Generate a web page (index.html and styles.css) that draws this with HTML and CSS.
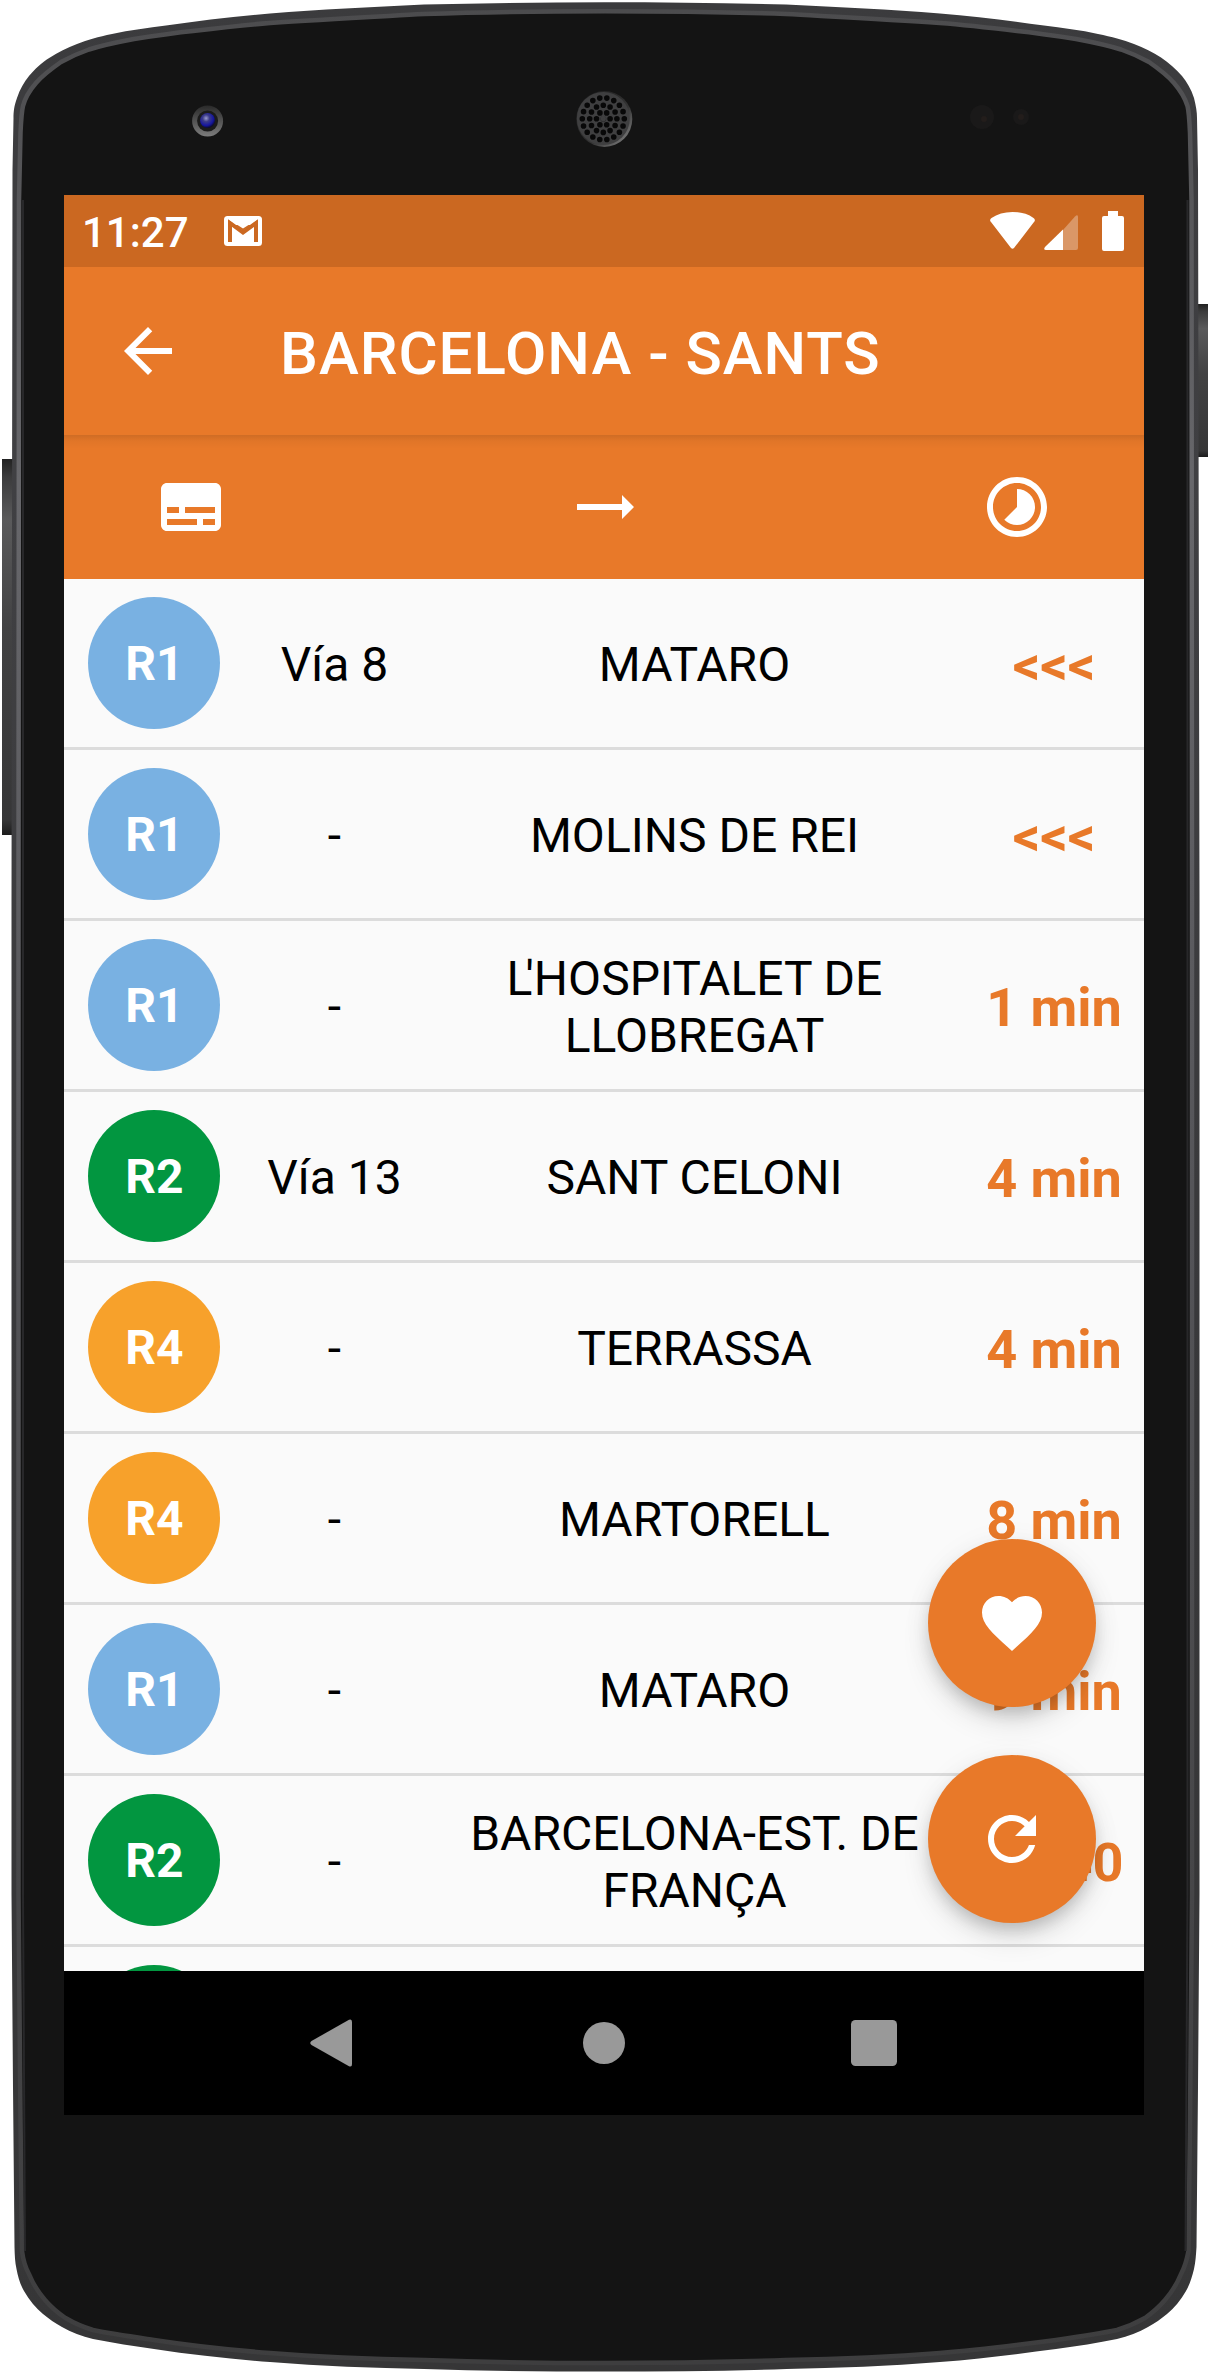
FILE: index.html
```html
<!DOCTYPE html>
<html lang="es">
<head>
<meta charset="utf-8">
<title>Barcelona - Sants</title>
<link rel="stylesheet" href="styles.css">
</head>
<body>
<div class="phone">
  <svg class="frame" viewBox="0 0 1210 2375" aria-hidden="true">
    <defs>
      <linearGradient id="rim" x1="0" y1="0" x2="0" y2="1">
        <stop offset="0" stop-color="#3b3b3d"/>
        <stop offset=".2" stop-color="#404043"/>
        <stop offset=".6" stop-color="#38383a"/>
        <stop offset="1" stop-color="#363637"/>
      </linearGradient>
      <linearGradient id="shine" x1="0" y1="0" x2="0" y2="1">
        <stop offset="0" stop-color="#4c4c4e"/>
        <stop offset=".2" stop-color="#67676b"/>
        <stop offset=".5" stop-color="#555559"/>
        <stop offset=".8" stop-color="#464648"/>
        <stop offset="1" stop-color="#3e3e3f"/>
      </linearGradient>
      <linearGradient id="key" x1="0" y1="0" x2="0" y2="1">
        <stop offset="0" stop-color="#222"/>
        <stop offset=".05" stop-color="#3c3c3d"/>
        <stop offset=".16" stop-color="#5a5a5b"/>
        <stop offset=".45" stop-color="#424243"/>
        <stop offset=".96" stop-color="#363637"/>
        <stop offset="1" stop-color="#1c1c1c"/>
      </linearGradient>
      <linearGradient id="lens" x1="0" y1="0" x2="0" y2="1">
        <stop offset="0" stop-color="#2a2a2a"/>
        <stop offset="1" stop-color="#7c7c7c"/>
      </linearGradient>
      <radialGradient id="iris" cx=".4" cy=".35" r=".65">
        <stop offset="0" stop-color="#9a9ad0"/>
        <stop offset=".35" stop-color="#3c3c88"/>
        <stop offset=".75" stop-color="#1616a0"/>
        <stop offset="1" stop-color="#0c0c30"/>
      </radialGradient>
      <linearGradient id="grille" x1="0" y1="0" x2="1" y2="1">
        <stop offset="0" stop-color="#1c1c1c"/>
        <stop offset=".6" stop-color="#333"/>
        <stop offset="1" stop-color="#909090"/>
      </linearGradient>
    </defs>
    <rect x="2" y="459" width="14" height="376" fill="url(#key)"/>
    <rect x="1195" y="304" width="13" height="153" fill="url(#key)"/>
    <path fill="url(#rim)" d="M605 2.3C545 2.3 484 3 424 4.5C370 7 320 9.500 270 13.500C235 16.500 200 20.500 166 25.500C148 28 130 30 112 34C98 37 88 39.500 77 44C67 48 58 52 50 57.500C41 63 35 69 29 76C24 82 20 89 17 98C14 106 13.500 112 13.500 118L12.500 170L11.500 900V1894L13 2087L14.500 2247C14.700 2255 15 2262 16.500 2269C18 2277 20 2284 24 2291C29 2300 36 2308 43 2314C49 2319 55 2323 62 2327C71 2332 82 2336.500 93 2339C113 2343 134 2346 154 2349C193 2355 231 2359 270 2362C321 2366 373 2368 424 2369C484 2371 545 2371.500 605 2371.500S726 2371 786.500 2369C838 2368 889 2366 940 2362C979 2359 1018 2354 1056 2349C1077 2346 1098 2343 1117 2339C1128 2336.500 1139 2332 1148 2327C1155 2323 1161 2319 1167 2314C1174 2308 1181 2300 1186 2291C1190 2284 1192 2277 1194 2269C1195.500 2262 1196 2255 1196.500 2247L1198 2087L1199.500 1894V900L1198 170L1197 118C1197 112 1196 106 1194 98C1191 89 1187 82 1182 76C1176 69 1169 63 1161 57.500C1153 52 1144 48 1134 44C1123 39.500 1112 37 1098 34C1081 30 1062 28 1044 25.500C1010 20.500 975 16.500 940 13.500C890 9.500 840 7 786 4.500C726 3 665 2.300 605 2.300Z"/>
    <path fill="#141414" stroke="url(#shine)" stroke-width="4.500" d="M605 11.300C545 11.300 484 12 424 14C370 17 320 19.500 270 23C244 25 218 28 193 31C173 33 153 36 134 39C118 42 103 45 89 49.500C79 53 70 57 61 62C51 69 43 75 36 83C30 90 25 98 23 106C21.500 112 21 122 20.500 133L19 200L18.500 900V1894L20.500 2120L22 2251C23 2259 25 2267 29 2274C33 2284 39 2293 45 2300C51 2307 58 2313 65.500 2318C74 2323 83 2327 93 2330C113 2334 134 2337 154 2340C193 2346 231 2350 270 2353C321 2357 373 2359 424 2360C484 2362 545 2363 605 2363S726 2362 786 2360C838 2359 889 2357 940 2353C979 2350 1018 2345 1056 2340C1077 2337 1098 2334 1117 2330C1127 2327 1136 2323 1145 2318C1152 2313 1159 2307 1165 2300C1171 2293 1177 2284 1181 2274C1185 2267 1187 2259 1188.500 2251L1190 2120L1192 1894V900L1191.500 200L1190 133C1189.500 122 1189 112 1187.500 106C1185 98 1180 90 1174 83C1167 75 1159 69 1149 62C1140 57 1131 53 1121 49.500C1107 45 1092 42 1076 39C1057 36 1037 33 1017 31C992 28 966 25 940 23C890 19.500 840 17 786 14C726 12 665 11.300 605 11.300Z"/>
    <path fill="none" stroke="#28282a" stroke-width="2" d="M23 200V1894L25 2251M1187.500 200V1894L1185.500 2251"/>
    <circle cx="207.600" cy="121" r="15.500" fill="url(#lens)"/>
    <circle cx="207.600" cy="121" r="10.500" fill="#1b1b1b"/>
    <circle cx="207.600" cy="120.500" r="7.500" fill="url(#iris)"/>
    <circle cx="604.300" cy="119" r="28" fill="url(#grille)"/>
    <circle cx="603.300" cy="118.500" r="26.500" fill="#3f3f40"/>
    <g fill="none" stroke="#080808" stroke-width="5.600" stroke-linecap="round">
      <circle cx="603.300" cy="118.800" r=".1" fill="#080808"/>
      <circle cx="603.300" cy="118.800" r="6.800" pathLength="6" stroke-dasharray="0 1"/>
      <circle cx="603.300" cy="118.800" r="13.600" pathLength="12" stroke-dasharray="0 1"/>
      <circle cx="603.300" cy="118.800" r="21" pathLength="18" stroke-dasharray="0 1"/>
    </g>
    <circle cx="982" cy="117" r="12" fill="#1a1919"/>
    <circle cx="984" cy="119" r="3" fill="#231d1b"/>
    <circle cx="1021" cy="117" r="8" fill="#1a1919"/>
    <circle cx="1021" cy="117" r="3" fill="#231d1b"/>
  </svg>

  <main class="screen">
    <div class="status">
      <span class="clock">11:27</span>
      <svg class="mail" width="38" height="30" viewBox="0 0 38 30"><rect width="38" height="30" rx="3.500" fill="#fff"/><path d="M6 26V7L19 16.500L32 7V26" fill="none" stroke="#cb6821" stroke-width="4"/><path d="M4 4.500L19 14.500L34 4.500V9H4Z" fill="#cb6821"/><path d="M4 3H34L19 12.500Z" fill="#fff"/></svg>
      <svg class="signals" width="135" height="40" viewBox="0 0 135 40">
        <path fill="#fff" d="M1 11Q-1 9 1.500 7Q10 1 22.500 1T43.500 7Q46 9 44 11L24 37Q22.500 38.500 21 37Z"/>
        <path fill="#da9767" d="M73 19L85 5.500Q88 3 88 6V37Q88 39 86 39H73Z"/>
        <path fill="#fff" d="M73 18.500V39H56Q53 39 55 36Z"/>
        <path fill="#fff" d="M112 5H118V0H128V5H132Q134 5 134 7V38Q134 40 132 40H114Q112 40 112 38V7Q112 5 114 5Z"/>
      </svg>
    </div>

    <header class="appbar">
      <svg class="icon" viewBox="0 0 24 24"><path d="M20 11H7.830l5.590-5.590L12 4l-8 8 8 8 1.410-1.410L7.830 13H20v-2z"/></svg>
      <h1 class="title">BARCELONA - SANTS</h1>
    </header>

    <div class="legend">
      <svg class="icon" viewBox="0 0 24 24"><path d="M20 4H4c-1.100 0-2 .9-2 2v12c0 1.100.9 2 2 2h16c1.100 0 2-.9 2-2V6c0-1.100-.9-2-2-2zM4 12h4v2H4v-2zm10 6H4v-2h10v2zm6 0h-4v-2h4v2zm0-4H10v-2h10v2z"/></svg>
      <svg class="icon" viewBox="0 0 24 24"><path d="M22 12l-4-4v3H3v2h15v3z"/></svg>
      <svg class="icon" viewBox="0 0 24 24"><path d="M16.240 7.760C15.070 6.590 13.540 6 12 6v6l-4.240 4.240c2.340 2.340 6.140 2.340 8.490 0 2.340-2.340 2.340-6.140-.01-8.480zM12 2C6.480 2 2 6.480 2 12s4.480 10 10 10 10-4.480 10-10S17.520 2 12 2zm0 18c-4.420 0-8-3.580-8-8s3.580-8 8-8 8 3.580 8 8-3.580 8-8 8z"/></svg>
    </div>

    <div class="board">
      <div class="row"><span class="line r1">R1</span><span class="via">Vía 8</span><span class="dest">MATARO</span><span class="time">&lt;&lt;&lt;</span></div>
      <div class="row"><span class="line r1">R1</span><span class="via">-</span><span class="dest">MOLINS DE REI</span><span class="time">&lt;&lt;&lt;</span></div>
      <div class="row"><span class="line r1">R1</span><span class="via">-</span><span class="dest"><span class="kern">L</span>'HOSPITALET DE LLOBREGAT</span><span class="time">1 min</span></div>
      <div class="row"><span class="line r2">R2</span><span class="via">Vía 13</span><span class="dest">SANT CELONI</span><span class="time">4 min</span></div>
      <div class="row"><span class="line r4">R4</span><span class="via">-</span><span class="dest">TERRASSA</span><span class="time">4 min</span></div>
      <div class="row"><span class="line r4">R4</span><span class="via">-</span><span class="dest">MARTORELL</span><span class="time">8 min</span></div>
      <div class="row"><span class="line r1">R1</span><span class="via">-</span><span class="dest">MATARO</span><span class="time">9 min</span></div>
      <div class="row"><span class="line r2">R2</span><span class="via">-</span><span class="dest">BARCELONA-EST. DE FRANÇA</span><span class="time">11:40</span></div>
      <div class="row"><span class="line r2"></span></div>
      <div class="fabs">
        <button class="fab" aria-label="Favorito"><svg class="icon" viewBox="0 0 24 24"><path d="M12 21.350l-1.450-1.320C5.400 15.360 2 12.280 2 8.500 2 5.420 4.420 3 7.500 3c1.740 0 3.410.81 4.500 2.090C13.090 3.810 14.760 3 16.500 3 19.580 3 22 5.420 22 8.500c0 3.780-3.400 6.860-8.550 11.540L12 21.350z"/></svg></button>
        <button class="fab" aria-label="Actualizar"><svg class="icon" viewBox="0 0 24 24"><path d="M17.650 6.350C16.200 4.900 14.210 4 12 4c-4.420 0-7.990 3.580-7.990 8s3.570 8 7.990 8c3.730 0 6.840-2.550 7.730-6h-2.080c-.82 2.330-3.040 4-5.650 4-3.310 0-6-2.690-6-6s2.690-6 6-6c1.660 0 3.140.69 4.220 1.780L13 11h7V4l-2.350 2.350z"/></svg></button>
      </div>
    </div>

    <nav class="navbar">
      <svg width="48" height="48" viewBox="0 0 48 48"><path fill="#999" d="M1.500 22L39 .8Q42 -.5 42 3V45Q42 48.500 39 47.200L1.500 26Q-1 24 1.500 22Z"/></svg>
      <svg width="48" height="48" viewBox="0 0 48 48"><circle cx="24" cy="24" r="21" fill="#999"/></svg>
      <svg width="48" height="48" viewBox="0 0 48 48"><rect x="1" y="1" width="46" height="46" rx="4.500" fill="#999"/></svg>
    </nav>
  </main>
</div>
</body>
</html>
```
FILE: styles.css
```css
* { box-sizing: border-box; }

body {
  margin: 0;
  background: #fff;
  font-family: Roboto, "Liberation Sans", sans-serif;
}

.phone {
  position: relative;
  width: 1210px;
  height: 2375px;
  padding: 195px 66px 0 64px;
  overflow: hidden;
}

.frame {
  position: absolute;
  inset: 0;
  width: 1210px;
  height: 2375px;
}

.screen {
  position: relative;
  display: flex;
  flex-direction: column;
  width: 1080px;
  height: 1920px;
  background: #fafafa;
}

.status {
  display: flex;
  align-items: center;
  height: 72px;
  padding: 0 19px 0 18px;
  background: #cb6821;
  color: #fff;
}

.clock {
  width: 142px;
  padding-top: 3px;
  font-size: 42px;
  font-weight: 500;
  line-height: 50px;
}

.signals { margin-left: auto; }

.appbar {
  display: flex;
  align-items: center;
  height: 168px;
  padding-left: 48px;
  background: #e87929;
  color: #fff;
}

.icon {
  display: block;
  flex: none;
  width: 72px;
  height: 72px;
  fill: #fff;
}

.title {
  margin: 0;
  padding: 5px 0 0 96px;
  font-size: 60px;
  font-weight: 500;
  line-height: 70px;
  letter-spacing: 1px;
  white-space: nowrap;
}

.legend {
  display: flex;
  align-items: center;
  justify-content: space-between;
  height: 144px;
  padding: 0 91px;
  background: linear-gradient(rgba(0, 0, 0, .11), rgba(0, 0, 0, .03) 6px, rgba(0, 0, 0, 0) 14px) #e87929;
}

.board {
  position: relative;
  height: 1392px;
  overflow: hidden;
}

.row {
  display: grid;
  grid-template-columns: 132px 228px 492px 48px 132px;
  align-items: center;
  height: 171px;
  padding: 0 24px;
  border-bottom: 3px solid #dcdcdc;
  font-size: 48px;
  line-height: 57px;
  text-align: center;
  color: #000;
}

.line {
  width: 132px;
  height: 132px;
  padding: 1px 0 0 1px;
  border-radius: 50%;
  color: #fff;
  font-weight: 700;
  line-height: 132px;
}

.r1 { background: #79b1e2; }
.r2 { background: #029640; }
.r4 { background: #f7a12b; }

.via, .dest { padding: 3px 0 0 1px; }

/* tightens the L before the apostrophe */
.kern { letter-spacing: -7px; }

.time {
  grid-column: 5;
  display: flex;
  justify-content: center;
  padding-top: 5px;
  font-size: 54px;
  font-weight: 700;
  line-height: 63px;
  white-space: nowrap;
  color: #e87929;
}

.fabs {
  position: absolute;
  right: 48px;
  bottom: 48px;
  display: flex;
  flex-direction: column;
  gap: 48px;
}

.fab {
  display: flex;
  align-items: center;
  justify-content: center;
  width: 168px;
  height: 168px;
  padding: 0;
  border: 0;
  border-radius: 50%;
  background: #e87929;
  box-shadow: 0 9px 15px -3px rgba(0, 0, 0, .16), 0 16px 28px rgba(0, 0, 0, .1), 0 3px 30px rgba(0, 0, 0, .05);
}

.navbar {
  display: flex;
  align-items: center;
  justify-content: center;
  gap: 222px;
  height: 144px;
  background: #000;
}
```
